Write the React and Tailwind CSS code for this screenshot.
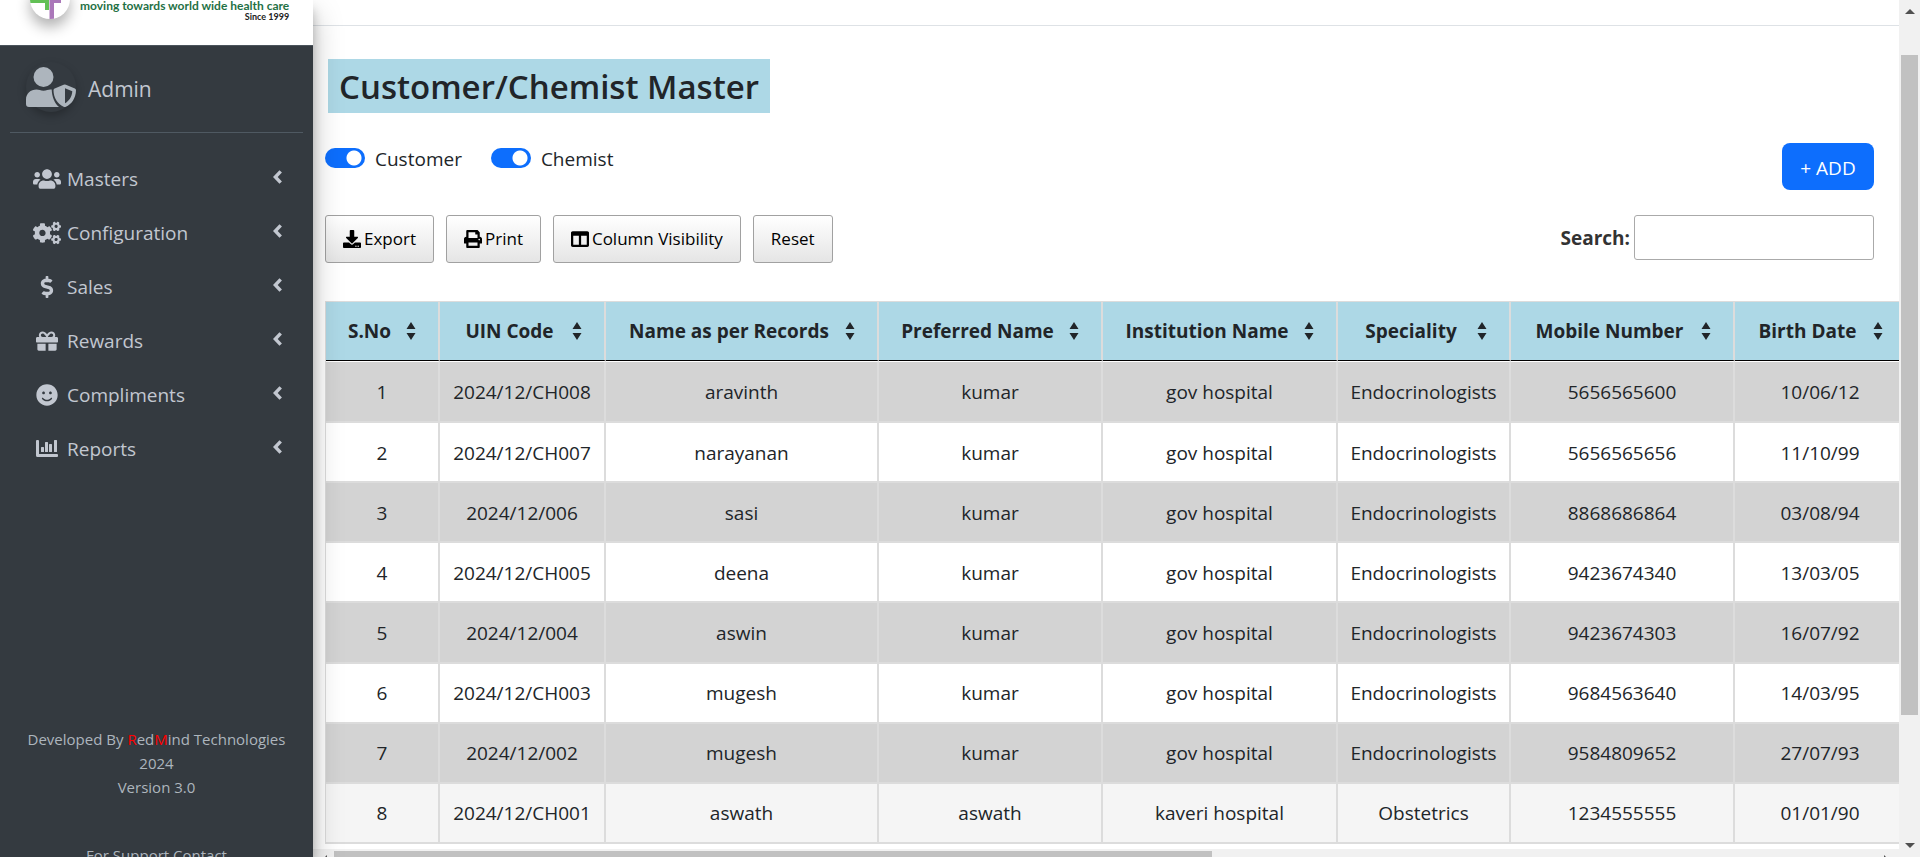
import { FaUsers, FaCogs, FaDollarSign, FaGift, FaSmile, FaDownload, FaPrint, FaColumns } from "react-icons/fa";

const menu = [
  { label: "Masters", icon: <FaUsers size={28} /> },
  { label: "Configuration", icon: <FaCogs size={28} /> },
  { label: "Sales", icon: <FaDollarSign size={22} /> },
  { label: "Rewards", icon: <FaGift size={22} /> },
  { label: "Compliments", icon: <FaSmile size={22} /> },
  { label: "Reports", icon: <ChartIcon /> },
];

const columns = [
  { label: "S.No", width: "w-[114px]" },
  { label: "UIN Code", width: "w-[166px]" },
  { label: "Name as per Records", width: "w-[273px]" },
  { label: "Preferred Name", width: "w-[224px]" },
  { label: "Institution Name", width: "w-[235px]" },
  { label: "Speciality", width: "w-[173px]" },
  { label: "Mobile Number", width: "w-[224px]" },
  { label: "Birth Date", width: "w-[172px]" },
];

const rows = [
  ["1", "2024/12/CH008", "aravinth", "kumar", "gov hospital", "Endocrinologists", "5656565600", "10/06/12"],
  ["2", "2024/12/CH007", "narayanan", "kumar", "gov hospital", "Endocrinologists", "5656565656", "11/10/99"],
  ["3", "2024/12/006", "sasi", "kumar", "gov hospital", "Endocrinologists", "8868686864", "03/08/94"],
  ["4", "2024/12/CH005", "deena", "kumar", "gov hospital", "Endocrinologists", "9423674340", "13/03/05"],
  ["5", "2024/12/004", "aswin", "kumar", "gov hospital", "Endocrinologists", "9423674303", "16/07/92"],
  ["6", "2024/12/CH003", "mugesh", "kumar", "gov hospital", "Endocrinologists", "9684563640", "14/03/95"],
  ["7", "2024/12/002", "mugesh", "kumar", "gov hospital", "Endocrinologists", "9584809652", "27/07/93"],
  ["8", "2024/12/CH001", "aswath", "aswath", "kaveri hospital", "Obstetrics", "1234555555", "01/01/90"],
];

function ChartIcon() {
  return (
    <svg className="mb-[2px]" width="22" height="17" viewBox="0 0 22 17" fill="currentColor" aria-hidden="true">
      <path d="M0 1a1 1 0 0 1 1-1h1a1 1 0 0 1 1 1v13h18a1 1 0 0 1 1 1v1a1 1 0 0 1-1 1H1.500a1.500 1.500 0 0 1-1.500-1.500z" />
      <rect x="5" y="7" width="3" height="5" rx="0.500" />
      <rect x="9" y="2" width="3" height="10" rx="0.500" />
      <rect x="13" y="4" width="3" height="8" rx="0.500" />
      <rect x="18" y="0" width="3" height="12" rx="0.500" />
    </svg>
  );
}

function ChevronIcon() {
  return (
    <svg className="mb-1 shrink-0" width="9" height="14" viewBox="0 0 9 14" fill="none" stroke="currentColor" strokeWidth="3.400" aria-hidden="true">
      <path d="M7.700 1.300L2.300 7l5.400 5.700" />
    </svg>
  );
}

function SortIcon() {
  return (
    <svg className="mr-[22px] shrink-0" width="10" height="18" viewBox="0 0 10 18" fill="currentColor" aria-hidden="true">
      <path d="M5 0l4.500 7h-9zM5 18l4.500-7h-9z" />
    </svg>
  );
}

function UserShieldIcon() {
  return (
    <svg width="50" height="40" viewBox="0 0 50 40" fill="currentColor" aria-hidden="true">
      <circle cx="17.500" cy="10" r="10" />
      <path d="M0 37v-4.500C0 26.500 4.700 22.500 10.500 22.500c2.500 0 4 1.200 7 1.200s4.500-1.200 7-1.200h1.200c.3 7.500 2.800 13.500 7.300 17.500H3a3 3 0 0 1-3-3z" />
      <path fillRule="evenodd" d="M37.600 17.800a3 3 0 0 1 2.300 0l9 3.600c.7.300 1.100.9 1.100 1.700 0 8.300-4.800 14.500-10.100 16.700a3 3 0 0 1-2.300 0C31.500 37.200 27.500 30.600 27.500 23.100c0-.8.500-1.400 1.200-1.700zM39 21.300v15c3.700-2 7-6.300 7.300-12z" />
    </svg>
  );
}

function Logo() {
  return (
    <svg className="-mt-[21px] h-10 w-10 shrink-0 rounded-full bg-white shadow-[0_8px_14px_rgba(0,0,0,0.3)]" viewBox="0 0 40 40" aria-hidden="true">
      <path d="M0 16h19v15h-4v-7H0z" fill="#62c055" />
      <path d="M19.500 16h11.500v8h-7v16h-4.500z" fill="#aa77b9" />
    </svg>
  );
}

function Sidebar() {
  return (
    <aside className="relative z-10 flex w-[313px] shrink-0 flex-col bg-[#343a40] text-[#c2c7d0] shadow-[0_14px_28px_rgba(0,0,0,0.25),0_10px_10px_rgba(0,0,0,0.22)]">
      <div className="flex h-[46px] shrink-0 items-start overflow-hidden border-b border-[#4b545c] bg-white pl-[30px]">
        <Logo />
        <div className="ml-[10px] flex flex-col items-end whitespace-nowrap font-[Lato,sans-serif]">
          <span className="text-[12px] leading-3 font-bold text-[#1f7145]">moving towards world wide health care</span>
          <span className="text-[9px] leading-[10px] font-bold text-[#222]">Since 1999</span>
        </div>
      </div>
      <div className="mx-[10px] flex h-[87px] shrink-0 items-center gap-3 border-b border-[#4f5962] pl-4">
        <span className="mb-1 flex h-[50px] w-[50px] items-center justify-center rounded-full text-[#adb5bd] shadow-[0_4px_8px_rgba(0,0,0,0.25)]">
          <UserShieldIcon />
        </span>
        <a href="#admin" className="text-[21px]">Admin</a>
      </div>
      <nav className="mt-[19px] flex flex-col">
        {menu.map((m) => (
          <a key={m.label} href={"#" + m.label.toLowerCase()} className="flex h-[54px] items-center pr-[31px] pl-[33px] text-[19px]">
            <span className="flex w-7 justify-center">{m.icon}</span>
            <span className="ml-[6px] flex-1">{m.label}</span>
            <ChevronIcon />
          </a>
        ))}
      </nav>
      <footer className="mt-[251px] flex flex-col text-center text-[15px] leading-6 whitespace-nowrap text-[#adb5bd]">
        <p>Developed By <span className="text-[#ff0000]">R</span>ed<span className="text-[#ff0000]">M</span>ind Technologies</p>
        <p>2024</p>
        <p>Version 3.0</p>
        <p className="mt-11">For Support Contact</p>
      </footer>
    </aside>
  );
}

function Toggle({ id, label }) {
  return (
    <label htmlFor={id} className="flex items-start gap-[10px]">
      <input id={id} type="checkbox" defaultChecked className="mt-[5px] h-5 w-10 appearance-none rounded-full bg-white bg-[radial-gradient(circle_at_29px_10px,white_7px,#0d6efd_8px)]" />
      <span className="pt-[2px]">{label}</span>
    </label>
  );
}

function ToolButton({ icon, children }) {
  return (
    <button type="button" className="flex h-12 items-center gap-[3px] rounded-[3px] border border-[#a1a1a1] bg-linear-to-b from-white to-[#e5e5e5] px-[17px] text-[17px] text-black">
      {icon}
      {children}
    </button>
  );
}

function DataTable() {
  return (
    <table className="h-[543px] w-[1581px] table-fixed border-separate border-spacing-0 border-t border-l border-[#dcdcdc] text-center">
      <thead>
        <tr className="h-[59px] bg-[#add8e6]">
          {columns.map((c) => (
            <th key={c.label} className={c.width + " border-r-2 border-b border-r-[#dcdcdc] border-b-black p-0 font-bold"}>
              <span className="flex items-center pl-[7px] whitespace-nowrap">
                <span className="flex-1">{c.label}</span>
                <SortIcon />
              </span>
            </th>
          ))}
        </tr>
      </thead>
      <tbody className="[&>tr:first-child>td]:border-t [&>tr:first-child>td]:border-t-white">
        {rows.map((r) => (
          <tr key={r[0]} className="bg-white odd:bg-[#d3d3d3] last:bg-[#f5f5f5]">
            {r.map((v, i) => (
              <td key={i} className="border-r-2 border-b-2 border-[#dcdcdc] p-0 pt-px">{v}</td>
            ))}
          </tr>
        ))}
      </tbody>
    </table>
  );
}

function Main() {
  return (
    <div className="flex min-w-0 flex-1 flex-col">
      <header className="h-[26px] shrink-0 border-b border-[#dee2e6]" />
      <main className="flex shrink-0 flex-col pl-3">
        <h1 className="mt-[33px] ml-[3px] flex h-[54px] items-center self-start bg-[#add8e6] px-[11px] pt-[2px] text-[33px] font-semibold whitespace-nowrap">Customer/Chemist Master</h1>
        <div className="mt-[30px] mr-[25px] flex items-start justify-between">
          <div className="flex gap-[29px]">
            <Toggle id="customer" label="Customer" />
            <Toggle id="chemist" label="Chemist" />
          </div>
          <button type="button" className="h-[47px] w-[92px] rounded-lg bg-[#0d6efd] pt-[2px] text-[19px] text-white">+ ADD</button>
        </div>
        <div className="mt-[25px] mr-[25px] flex items-start justify-between">
          <div className="flex gap-3">
            <ToolButton icon={<FaDownload size={18} />}>Export</ToolButton>
            <ToolButton icon={<FaPrint size={18} />}>Print</ToolButton>
            <ToolButton icon={<FaColumns size={18} />}>Column Visibility</ToolButton>
            <ToolButton>Reset</ToolButton>
          </div>
          <div className="flex items-center gap-1 text-[#333]">
            <label htmlFor="search" className="font-bold">Search:</label>
            <input id="search" type="search" className="h-[45px] w-60 rounded-[3px] border border-[#aaa] bg-white px-2" />
          </div>
        </div>
        <div className="mt-[38px] overflow-hidden">
          <DataTable />
        </div>
      </main>
      <div className="mt-[5px] flex h-[21px] shrink-0 items-center bg-[#f1f1f1]">
        <svg className="ml-2 shrink-0" width="6" height="10" viewBox="0 0 6 10" fill="#505050" aria-hidden="true"><path d="M6 0v10L1 5z" /></svg>
        <div className="ml-[7px] h-[17px] w-[calc(56%-10px)] bg-[#c1c1c1]" />
        <svg className="mr-[9px] ml-auto shrink-0" width="6" height="10" viewBox="0 0 6 10" fill="#505050" aria-hidden="true"><path d="M0 0v10l5-5z" /></svg>
      </div>
    </div>
  );
}

function PageScrollbar() {
  return (
    <div className="flex w-[21px] shrink-0 flex-col items-center bg-[#f1f1f1]">
      <svg className="mt-[9px]" width="10" height="5" viewBox="0 0 10 5" fill="#505050" aria-hidden="true"><path d="M0 5h10L5 0z" /></svg>
      <div className="mt-[41px] h-[77%] w-[17px] bg-[#c1c1c1]" />
      <svg className="mt-auto mb-[9px]" width="10" height="5" viewBox="0 0 10 5" fill="#505050" aria-hidden="true"><path d="M0 0h10L5 5z" /></svg>
    </div>
  );
}

export default function App() {
  return (
    <div className="flex h-screen overflow-hidden bg-white font-['Open_Sans',sans-serif] text-[19px] leading-7 text-[#212529]">
      <Sidebar />
      <Main />
      <PageScrollbar />
    </div>
  );
}
